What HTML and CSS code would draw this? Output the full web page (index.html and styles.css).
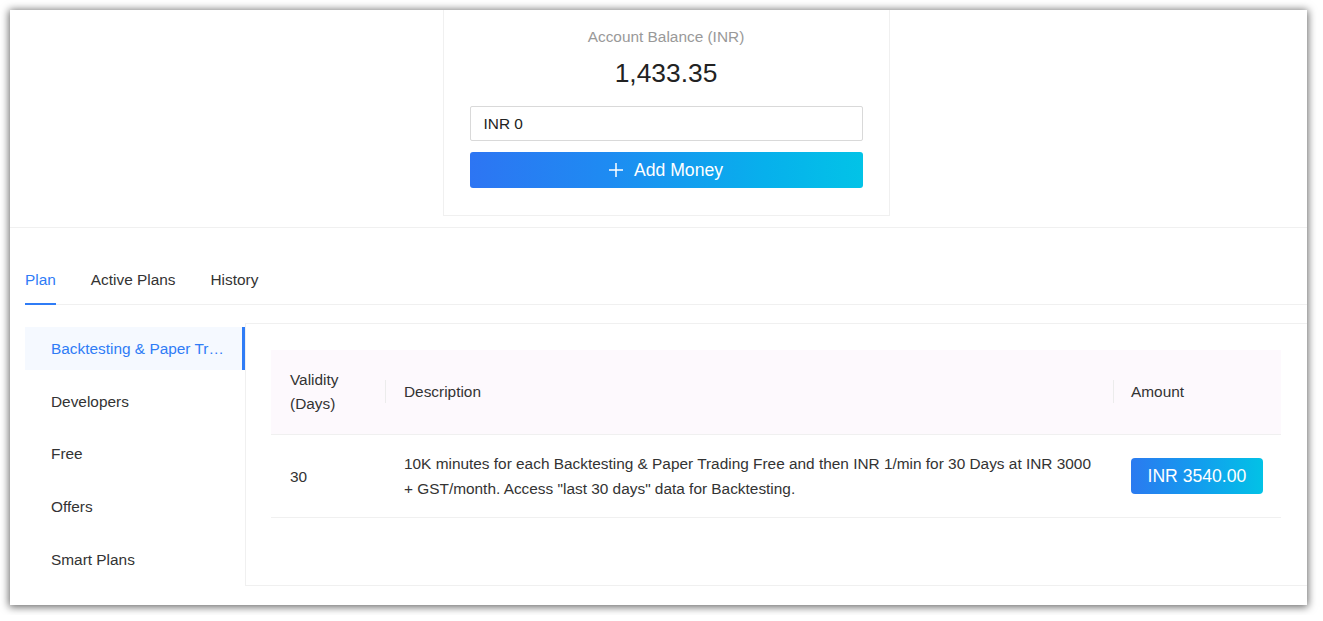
FILE: index.html
```html
<!DOCTYPE html>
<html>
<head>
<meta charset="utf-8">
<link rel="stylesheet" href="styles.css">
</head>
<body>
<div class="window">
  <div class="top">
    <div class="balance-card">
      <div class="balance-label">Account Balance (INR)</div>
      <div class="balance-value">1,433.35</div>
      <div class="amount-input">INR 0</div>
      <button class="add-btn">
        <svg class="plus" width="14" height="14" viewBox="0 0 14 14"><path d="M7 0v14M0 7h14" stroke="#fff" stroke-width="1.5" fill="none"/></svg>
        <span>Add Money</span>
      </button>
    </div>
  </div>
  <div class="section">
    <div class="tabs">
      <div class="tab active">Plan</div>
      <div class="tab">Active Plans</div>
      <div class="tab">History</div>
    </div>
    <div class="content">
      <div class="menu">
        <div class="menu-item selected">Backtesting &amp; Paper Trading</div>
        <div class="menu-item">Developers</div>
        <div class="menu-item">Free</div>
        <div class="menu-item">Offers</div>
        <div class="menu-item">Smart Plans</div>
      </div>
      <div class="panel">
        <table class="plans">
          <colgroup>
            <col class="c-validity">
            <col class="c-desc">
            <col class="c-amount">
          </colgroup>
          <thead>
            <tr>
              <th>Validity<br>(Days)</th>
              <th class="sep">Description</th>
              <th class="sep">Amount</th>
            </tr>
          </thead>
          <tbody>
            <tr>
              <td>30</td>
              <td>10K minutes for each Backtesting &amp; Paper Trading Free and then INR 1/min for 30 Days at INR 3000 + GST/month. Access "last 30 days" data for Backtesting.</td>
              <td><span class="price">INR 3540.00</span></td>
            </tr>
          </tbody>
        </table>
      </div>
    </div>
  </div>
</div>
</body>
</html>
```

FILE: styles.css
```css
* { box-sizing: border-box; }
html, body { margin: 0; padding: 0; background: #fff; }
body {
  padding: 10px;
  font-family: "Liberation Sans", Arial, sans-serif;
  color: #333;
  font-size: 15.4px;
}
.window {
  width: 1297px;
  height: 595px;
  background: #fff;
  overflow: hidden;
  box-shadow: 0 1px 8px 1px rgba(0,0,0,0.6);
}
.top {
  border-bottom: 1px solid #f0f0f0;
  padding: 0 0 11px 15px;
  display: flex;
  justify-content: center;
}
.balance-card {
  width: 447px;
  border: 1px solid #f0f0f0;
  border-top: none;
  padding: 16px 26px 27px;
  text-align: center;
}
.balance-label {
  color: #999;
  font-size: 15.4px;
  line-height: 22px;
}
.balance-value {
  margin-top: 9px;
  font-size: 26.4px;
  line-height: 32px;
  color: #222;
}
.amount-input {
  margin-top: 17px;
  height: 35px;
  border: 1px solid #d9d9d9;
  border-radius: 2px;
  text-align: left;
  padding: 0 13px;
  line-height: 33px;
  font-size: 15.4px;
  color: #222;
}
.add-btn {
  margin-top: 11px;
  width: 100%;
  height: 36px;
  border: none;
  border-radius: 3px;
  background: linear-gradient(90deg, #2d75f3 0%, #1e8bf2 35%, #07b0ec 75%, #02c3e7 100%);
  color: #fff;
  font-family: inherit;
  font-size: 17.6px;
  display: flex;
  align-items: center;
  justify-content: center;
  gap: 11px;
  padding: 0;
}
.add-btn .plus { display: block; }
.section {
  padding-left: 15px;
}
.tabs {
  margin-top: 29px;
  display: flex;
  gap: 35px;
  border-bottom: 1px solid #f0f0f0;
}
.tab {
  padding: 12px 0;
  line-height: 22px;
  color: #333;
  border-bottom: 2px solid transparent;
  margin-bottom: -1px;
}
.tab.active {
  color: #2f7cf6;
  border-bottom-color: #2f7cf6;
}
.content {
  margin-top: 18px;
  display: flex;
}
.menu {
  width: 220px;
  flex: none;
  padding: 4px 0 5px;
}
.menu-item {
  height: 43px;
  line-height: 43px;
  padding: 0 15px 0 26px;
  margin-bottom: 9.7px;
  white-space: nowrap;
  overflow: hidden;
  text-overflow: ellipsis;
  color: #333;
}
.menu-item:last-child { margin-bottom: 0; }
.menu-item.selected {
  color: #2f7cf6;
  background: #f5f9ff;
  border-right: 3px solid #2f7cf6;
}
.panel {
  flex: 1;
  border: 1px solid #f0f0f0;
  border-right: none;
  padding: 26px 26px 0 25px;
}
.plans {
  width: 100%;
  border-collapse: collapse;
  table-layout: fixed;
}
.c-validity { width: 114px; }
.c-amount { width: 168px; }
.plans th {
  background: #fdf9fd;
  font-weight: normal;
  text-align: left;
  padding: 18px 18px;
  line-height: 24px;
  color: #333;
  border-bottom: 1px solid #f0f0f0;
  position: relative;
}
.plans th:first-child { padding-left: 19px; }
.plans th:nth-child(2), .plans td:nth-child(2) { padding-left: 19px; }
.plans th.sep::before {
  content: "";
  position: absolute;
  left: 0;
  top: 30px;
  height: 23px;
  width: 1px;
  background: #ececec;
}
.plans td {
  padding: 16px 18px 16px;
  line-height: 25px;
  color: #333;
  border-bottom: 1px solid #f0f0f0;
  vertical-align: middle;
}
.plans td:first-child { padding-left: 19px; }
.price {
  display: inline-block;
  white-space: nowrap;
  height: 36px;
  line-height: 36px;
  padding: 0 16.5px;
  border-radius: 4px;
  color: #fff;
  font-size: 17.6px;
  background: linear-gradient(90deg, #2b7af0 0%, #139cee 50%, #02c2e6 100%);
}
```
